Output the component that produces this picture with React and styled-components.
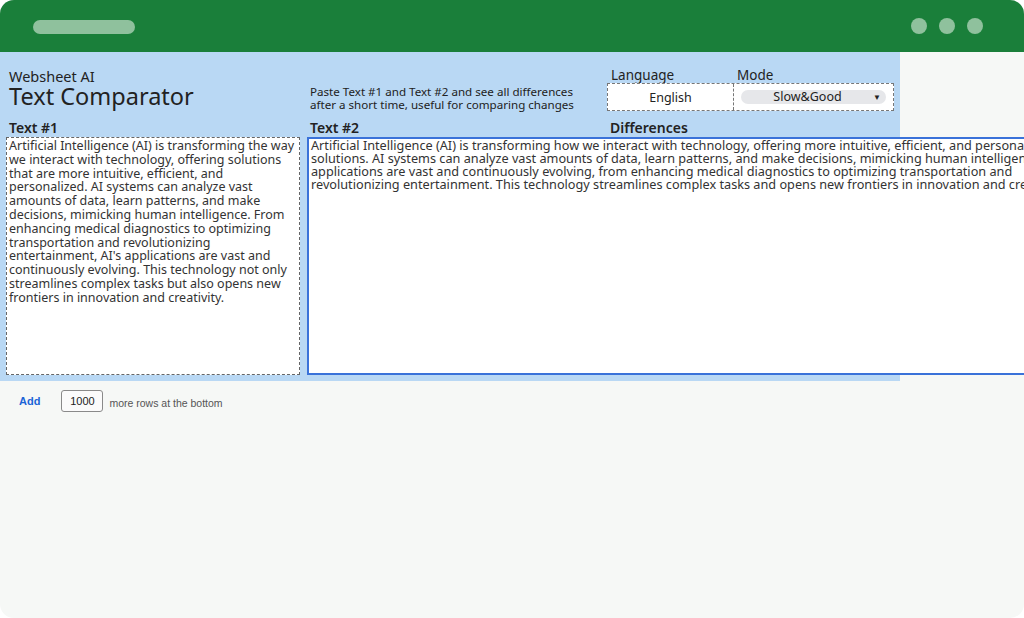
import React from "react";
import styled, { createGlobalStyle } from "styled-components";

const text1 =
  "Artificial Intelligence (AI) is transforming the way\nwe interact with technology, offering solutions\nthat are more intuitive, efficient, and\npersonalized. AI systems can analyze vast\namounts of data, learn patterns, and make\ndecisions, mimicking human intelligence. From\nenhancing medical diagnostics to optimizing\ntransportation and revolutionizing\nentertainment, AI's applications are vast and\ncontinuously evolving. This technology not only\nstreamlines complex tasks but also opens new\nfrontiers in innovation and creativity.";

const text2 = [
  "Artificial Intelligence (AI) is transforming how we interact with technology, offering more intuitive, efficient, and personalized",
  "solutions. AI systems can analyze vast amounts of data, learn patterns, and make decisions, mimicking human intelligence. AI's",
  "applications are vast and continuously evolving, from enhancing medical diagnostics to optimizing transportation and",
  "revolutionizing entertainment. This technology streamlines complex tasks and opens new frontiers in innovation and creativity.",
];

export default function App() {
  return (
    <>
      <GlobalStyle />
      <Window>
        <TopBar>
          <AddressPill />
          <Dots>
            <Dot />
            <Dot />
            <Dot />
          </Dots>
        </TopBar>
        <Sheet>
          <Panel>
            <HeaderRow>
              <TitleCell>
                <Brand>Websheet AI</Brand>
                <Title>Text Comparator</Title>
              </TitleCell>
              <Intro>
                Paste Text #1 and Text #2 and see all differences
                <br />
                after a short time, useful for comparing changes
              </Intro>
              <Settings>
                <SettingLabels>
                  <SettingLabel $w={126}>Language</SettingLabel>
                  <SettingLabel>Mode</SettingLabel>
                </SettingLabels>
                <SettingTable>
                  <SettingCell $w={126}>English</SettingCell>
                  <SettingCell $grow>
                    <ModeSelect>
                      Slow&amp;Good
                      <Caret>▼</Caret>
                    </ModeSelect>
                  </SettingCell>
                </SettingTable>
              </Settings>
            </HeaderRow>
            <LabelRow>
              <ColLabel>Text #1</ColLabel>
              <ColLabel>Text #2</ColLabel>
              <ColLabel>Differences</ColLabel>
            </LabelRow>
            <BoxRow>
              <TextBox>{text1}</TextBox>
              <DiffBox>
                {text2.map((line, i) => (
                  <DiffLine key={i}>{line}</DiffLine>
                ))}
              </DiffBox>
            </BoxRow>
          </Panel>
          <Footer>
            <AddLink>Add</AddLink>
            <RowsInput>1000</RowsInput>
            <FooterNote>more rows at the bottom</FooterNote>
          </Footer>
        </Sheet>
      </Window>
    </>
  );
}

const GlobalStyle = createGlobalStyle`
  html, body {
    margin: 0;
    padding: 0;
    background: #ffffff;
  }
  body {
    width: 1024px;
    height: 618px;
    overflow: hidden;
  }
  * {
    box-sizing: border-box;
  }
`;

const font = `"Noto Sans", "Open Sans", sans-serif`;

const Window = styled.div`
  width: 1024px;
  height: 618px;
  border-radius: 14px;
  overflow: hidden;
  background: #f6f8f6;
  display: flex;
  flex-direction: column;
`;

const TopBar = styled.div`
  height: 52px;
  flex-shrink: 0;
  background: #1a7f3a;
  display: flex;
  align-items: center;
  justify-content: space-between;
  padding: 0 41px 0 33px;
`;

const AddressPill = styled.div`
  width: 102px;
  height: 14px;
  border-radius: 7px;
  background: #8fc19d;
  margin-top: 1px;
`;

const Dots = styled.div`
  display: flex;
  gap: 12px;
`;

const Dot = styled.div`
  width: 16px;
  height: 16px;
  border-radius: 50%;
  background: #8fc19d;
`;

const Sheet = styled.div`
  flex: 1;
  display: flex;
  flex-direction: column;
`;

const Panel = styled.div`
  width: 900px;
  background: #b9d8f4;
  padding: 0 0 6px 6px;
  font-family: ${font};
  color: #222;
`;

const HeaderRow = styled.div`
  display: grid;
  grid-template-columns: 301px 300px 287px;
  height: 60px;
  align-items: end;
`;

const TitleCell = styled.div`
  padding: 0 0 4px 3px;
`;

const Brand = styled.div`
  font-size: 14.5px;
  line-height: 17px;
`;

const Title = styled.div`
  font-size: 23.5px;
  line-height: 23px;
`;

const Intro = styled.div`
  padding: 0 0 1px 3px;
  font-size: 11.6px;
  line-height: 13px;
  white-space: nowrap;
`;

const Settings = styled.div`
  display: flex;
  flex-direction: column;
  padding-bottom: 1px;
`;

const SettingLabels = styled.div`
  display: flex;
  padding-left: 4px;
`;

const SettingLabel = styled.div`
  width: ${(p) => (p.$w ? `${p.$w}px` : "auto")};
  font-size: 13.5px;
  line-height: 15px;
`;

const SettingTable = styled.div`
  display: flex;
  height: 28px;
  border: 1px dashed #777;
  background: #fff;
`;

const SettingCell = styled.div`
  width: ${(p) => (p.$w ? `${p.$w}px` : "auto")};
  flex: ${(p) => (p.$grow ? 1 : "none")};
  display: flex;
  align-items: center;
  justify-content: center;
  font-size: 12.5px;
  border-right: ${(p) => (p.$grow ? "none" : "1px dashed #777")};
  padding: ${(p) => (p.$grow ? "0 7px" : "0")};
`;

const ModeSelect = styled.div`
  position: relative;
  width: 100%;
  height: 14px;
  border-radius: 7px;
  background: #e6e7ea;
  display: flex;
  align-items: center;
  justify-content: center;
  padding-right: 12px;
  font-size: 12.5px;
  line-height: 14px;
`;

const Caret = styled.span`
  position: absolute;
  right: 5px;
  font-size: 8px;
  line-height: 14px;
  color: #222;
`;

const LabelRow = styled.div`
  display: grid;
  grid-template-columns: 301px 300px 287px;
  height: 25px;
  align-items: end;
`;

const ColLabel = styled.div`
  padding: 0 0 1px 3px;
  font-size: 14px;
  font-weight: 600;
  line-height: 17px;
`;

const BoxRow = styled.div`
  display: flex;
  gap: 7px;
  height: 238px;
`;

const TextBox = styled.div`
  width: 294px;
  flex-shrink: 0;
  background: #fff;
  border: 1px dashed #666;
  padding: 1px 2px;
  white-space: pre;
  font-size: 12.5px;
  line-height: 13.8px;
  color: #333;
  overflow: hidden;
`;

const DiffBox = styled.div`
  width: 800px;
  flex-shrink: 0;
  background: #fff;
  border: 2px solid #3a72d9;
  padding: 0 2px;
  overflow: hidden;
`;

const DiffLine = styled.div`
  white-space: pre;
  font-size: 12.7px;
  line-height: 13px;
  color: #333;
`;

const Footer = styled.div`
  display: flex;
  align-items: center;
  height: 40px;
  padding-left: 19px;
  font-family: "Liberation Sans", Arial, sans-serif;
`;

const AddLink = styled.span`
  color: #1a64d6;
  font-size: 11px;
  font-weight: 700;
  margin-right: 21px;
`;

const RowsInput = styled.div`
  width: 42px;
  height: 22px;
  border: 1px solid #8a8a8a;
  border-radius: 3px;
  background: #fbfbfb;
  display: flex;
  align-items: center;
  justify-content: center;
  font-size: 11px;
  color: #222;
  margin-right: 6px;
`;

const FooterNote = styled.span`
  font-size: 10.5px;
  color: #555;
  margin-top: 3px;
`;
